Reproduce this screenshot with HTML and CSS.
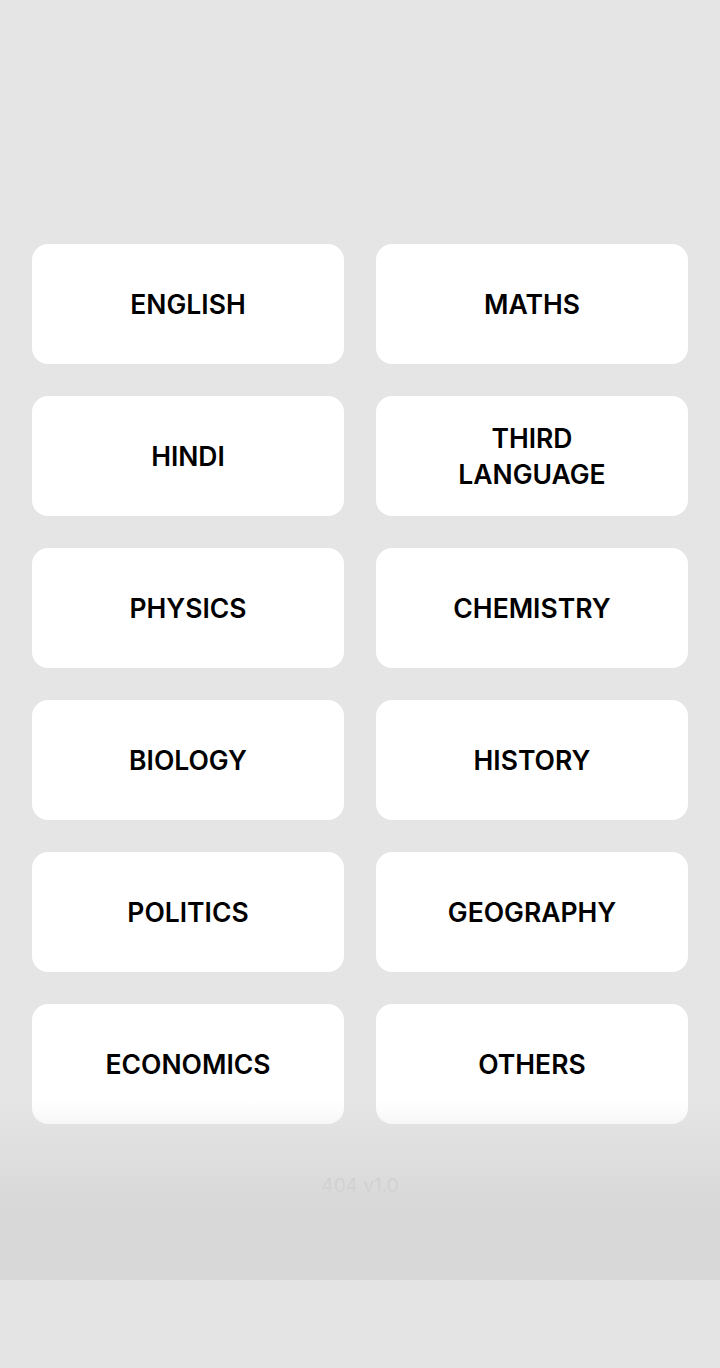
FILE: index.html
```html
<!DOCTYPE html>
<html lang="en">
<head>
<meta charset="utf-8">
<title>Subjects</title>
<link rel="stylesheet" href="styles.css">
</head>
<body>
<main class="page">
  <div class="grid">
    <button class="card">ENGLISH</button>
    <button class="card">MATHS</button>
    <button class="card">HINDI</button>
    <button class="card">THIRD LANGUAGE</button>
    <button class="card">PHYSICS</button>
    <button class="card">CHEMISTRY</button>
    <button class="card">BIOLOGY</button>
    <button class="card">HISTORY</button>
    <button class="card">POLITICS</button>
    <button class="card">GEOGRAPHY</button>
    <button class="card">ECONOMICS</button>
    <button class="card">OTHERS</button>
  </div>
  <p class="version">404 v1.0</p>
  <div class="fade"></div>
</main>
</body>
</html>
```
FILE: styles.css
```css
html, body {
  margin: 0;
  padding: 0;
  background: #e4e4e4;
}
body {
  font-family: Inter, "Noto Sans", sans-serif;
}
.page {
  position: relative;
  height: 1280px;
  box-sizing: border-box;
  padding: 244px 32px 0;
  background: #e5e5e5;
  overflow: hidden;
}
.grid {
  display: grid;
  grid-template-columns: 1fr 1fr;
  grid-auto-rows: 120px;
  gap: 32px;
}
.card {
  border: none;
  background: #ffffff;
  border-radius: 16px;
  padding: 0 60px;
  font-family: Inter, "Noto Sans", sans-serif;
  font-size: 26.5px;
  font-weight: 600;
  line-height: 36px;
  color: #000;
  text-align: center;
  display: flex;
  align-items: center;
  justify-content: center;
}
.version {
  margin: 50px 0 0;
  text-align: center;
  font-size: 19px;
  line-height: 24px;
  color: #b8b8b8;
}
.fade {
  position: absolute;
  left: 0;
  right: 0;
  top: 1100px;
  bottom: 0;
  background: linear-gradient(to bottom, rgba(216,216,216,0) 0px, rgba(216,216,216,0.92) 100px, #d8d8d8 120px);
}
```
